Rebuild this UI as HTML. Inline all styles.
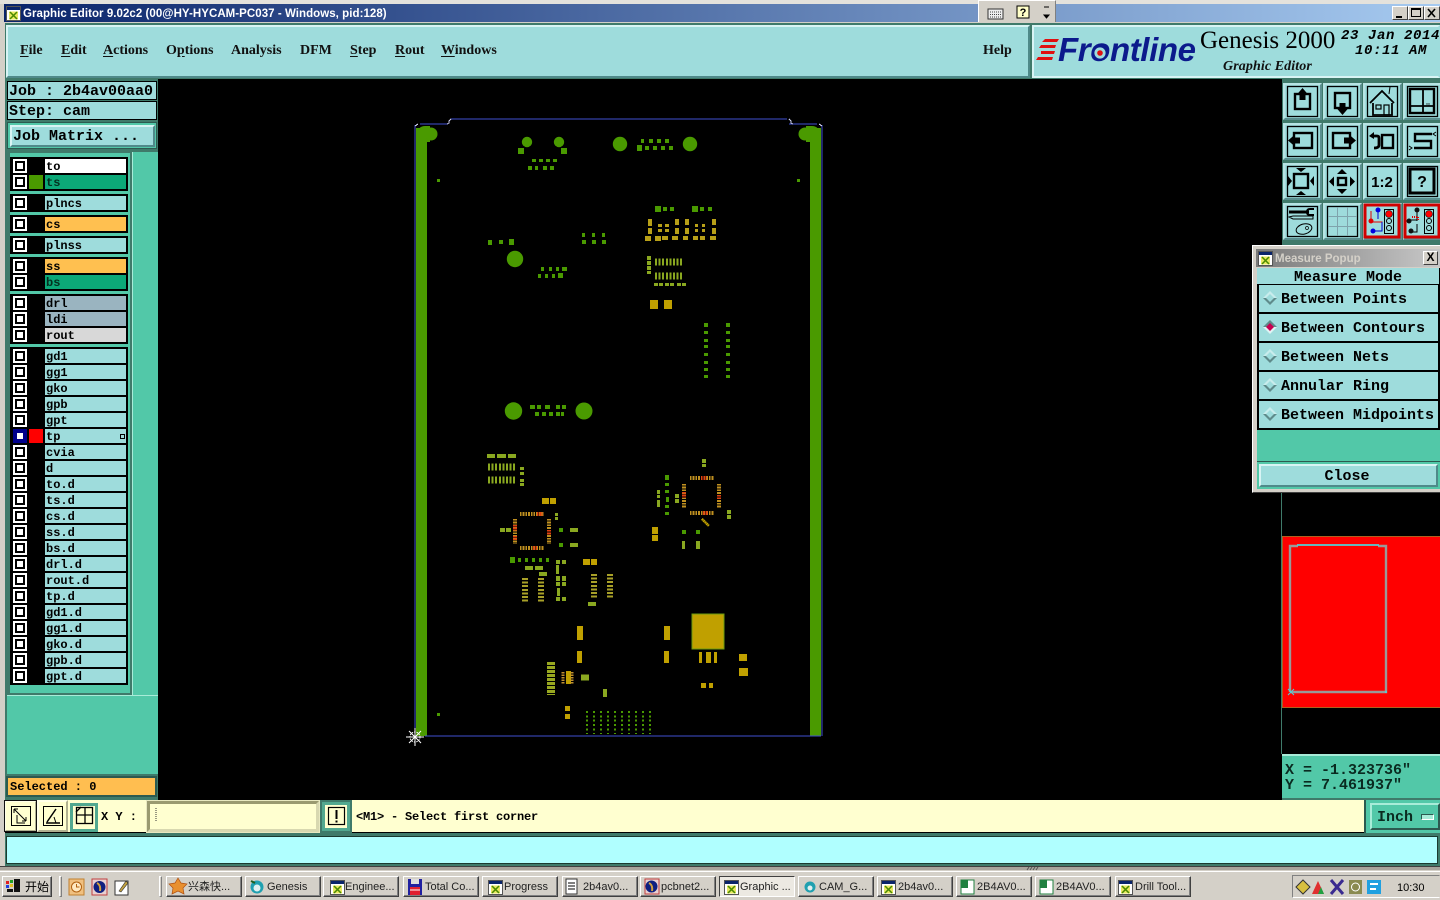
<!DOCTYPE html>
<html><head><meta charset="utf-8"><title>Graphic Editor</title>
<style>
html,body{margin:0;padding:0;width:1440px;height:900px;overflow:hidden;background:#d4d0c8}
div{position:absolute;box-sizing:border-box;white-space:pre}
.m{font-family:"Liberation Mono",monospace;font-weight:bold;color:#000}
.g{left:10px;width:118px;background:#000}
.r{left:45px;width:81px;height:14px;background:#9edcdc;font:bold 12px/16px "Liberation Mono",monospace;color:#000;padding-left:1px;letter-spacing:0}
.c{left:13px;width:14px;height:14px;border:2px solid #fff;background:#fff;box-shadow:inset 0 0 0 2px #000}
.t{font:bold 14px/20px "Liberation Serif",serif;top:41px;color:#111}
.t u{text-underline-offset:2px}
.p{left:1259px;width:179px;height:27px;background:#9edcdc;font:bold 15px/29px "Liberation Mono",monospace;padding-left:22px}
.b{top:876px;height:21px;width:76px;background:#d4d0c8;border:1px solid;border-color:#fff #404040 #404040 #fff;box-shadow:inset -1px -1px 0 #808080;font:11px/21px "Liberation Sans","Noto Sans CJK SC",sans-serif;color:#222;padding-left:20px;overflow:hidden}
svg{position:absolute;left:0;top:0}
svg text{font-family:"Liberation Sans",sans-serif}
</style></head><body>

<!-- title -->
<div style="left:0;top:0;width:1440px;height:4px;background:#e4e2dc"></div>
<div style="left:4px;top:4px;width:1436px;height:18px;background:linear-gradient(90deg,#0a246a,#a6caf0)"></div>
<div style="left:23px;top:5px;height:18px;font:bold 11.5px/18px 'Liberation Sans',sans-serif;color:#fff;letter-spacing:.05px">Graphic Editor 9.02c2 (00@HY-HYCAM-PC037 - Windows, pid:128)</div>
<div style="left:978px;top:0;width:78px;height:23px;background:#d4d0c8;border:1px solid;border-color:#fff #808080 #808080 #fff"></div>
<div style="left:1392px;top:6px;width:16px;height:14px;background:#d4d0c8;border:1px solid;border-color:#fff #404040 #404040 #fff"></div>
<div style="left:1408px;top:6px;width:16px;height:14px;background:#d4d0c8;border:1px solid;border-color:#fff #404040 #404040 #fff"></div>
<div style="left:1424px;top:6px;width:16px;height:14px;background:#d4d0c8;border:1px solid;border-color:#fff #404040 #404040 #fff"></div>

<!-- main -->
<div style="left:0;top:22px;width:1440px;height:850px;background:#d4d0c8"></div>
<div style="left:5px;top:23px;width:1435px;height:844px;background:#3f7a6a"></div>
<div style="left:6px;top:25px;width:1024px;height:53px;background:#9edcdc;border:2px solid;border-color:#d8f4f4 #4f8a8a #4f8a8a #d8f4f4"></div>
<div style="left:1032px;top:25px;width:408px;height:53px;background:#9edcdc;border:2px solid;border-color:#d8f4f4 #9edcdc #d8f4f4 #d8f4f4"></div>
<div class="t" style="left:20px"><u>F</u>ile</div>
<div class="t" style="left:61px"><u>E</u>dit</div>
<div class="t" style="left:103px"><u>A</u>ctions</div>
<div class="t" style="left:166px">O<u>p</u>tions</div>
<div class="t" style="left:231px">Analysis</div>
<div class="t" style="left:300px">DFM</div>
<div class="t" style="left:350px"><u>S</u>tep</div>
<div class="t" style="left:395px"><u>R</u>out</div>
<div class="t" style="left:441px"><u>W</u>indows</div>
<div class="t" style="left:983px">Help</div>

<div style="left:1058px;top:31px;font:italic bold 33px/38px 'Liberation Sans',sans-serif;color:#0c1a8c;letter-spacing:-.4px">Frontline</div>
<div style="left:1200px;top:26px;font:25px/30px 'Liberation Serif',serif;color:#000">Genesis 2000</div>
<div style="left:1223px;top:58px;font:italic bold 14px/17px 'Liberation Serif',serif;color:#111;letter-spacing:.1px">Graphic Editor</div>
<div class="m" style="left:1341px;top:28px;font-style:italic;font-size:14px;line-height:16px;letter-spacing:.6px">23 Jan 2014</div>
<div class="m" style="left:1355px;top:43px;font-style:italic;font-size:14px;line-height:16px;letter-spacing:.6px">10:11 AM</div>

<!-- canvas -->
<div style="left:158px;top:79px;width:1124px;height:721px;background:#000"></div>

<!-- left panel -->
<div style="left:5px;top:79px;width:153px;height:721px;background:#3f7a6a"></div>
<div class="m" style="left:7px;top:81px;width:150px;height:19px;background:#9edcdc;border:1px solid #000;font-size:15px;line-height:19px;padding-left:1px">Job : 2b4av00aa0</div>
<div class="m" style="left:7px;top:101px;width:150px;height:19px;background:#9edcdc;border:1px solid #000;font-size:15px;line-height:19px;padding-left:1px">Step: cam</div>
<div style="left:7px;top:122px;width:150px;height:27px;background:#52c8a8;border:1px solid #2c5a50"></div>
<div class="m" style="left:10px;top:125px;width:145px;height:22px;background:#9edcdc;border:2px solid;border-color:#d8f4f4 #4f8a8a #4f8a8a #d8f4f4;font-size:15px;line-height:20px;padding-left:1px">Job Matrix ...</div>
<div style="left:132px;top:152px;width:26px;height:622px;background:#52c8a8;border-left:1px solid #a8ecd8"></div>
<div style="left:7px;top:695px;width:151px;height:79px;background:#52c8a8;border-top:1px solid #a8ecd8"></div>
<div style="left:10px;top:153px;width:121px;height:541px;background:#52c8a8;border-right:1px solid #3f7a6a;border-bottom:1px solid #3f7a6a"></div>

<div class="g" style="top:157px;height:34px"></div>
<div class="g" style="top:194px;height:18px"></div>
<div class="g" style="top:215px;height:18px"></div>
<div class="g" style="top:236px;height:18px"></div>
<div class="g" style="top:257px;height:34px"></div>
<div class="g" style="top:294px;height:50px"></div>
<div class="g" style="top:347px;height:338px"></div>

<div class="c" style="top:159px"></div><div class="r" style="top:159px;background:#fff">to</div>
<div class="c" style="top:175px"></div><div class="r" style="top:175px;background:#0ca878;color:#043020">ts</div>
<div style="left:29px;top:175px;width:14px;height:14px;background:#4a9a00"></div>
<div class="c" style="top:196px"></div><div class="r" style="top:196px">plncs</div>
<div class="c" style="top:217px"></div><div class="r" style="top:217px;background:#ffc050">cs</div>
<div class="c" style="top:238px"></div><div class="r" style="top:238px">plnss</div>
<div class="c" style="top:259px"></div><div class="r" style="top:259px;background:#ffc050">ss</div>
<div class="c" style="top:275px"></div><div class="r" style="top:275px;background:#0ca878;color:#043020">bs</div>
<div class="c" style="top:296px"></div><div class="r" style="top:296px;background:#9ab4c0">drl</div>
<div class="c" style="top:312px"></div><div class="r" style="top:312px;background:#9ab4c0">ldi</div>
<div class="c" style="top:328px"></div><div class="r" style="top:328px;background:#d8d8d8">rout</div>
<div class="c" style="top:349px"></div><div class="r" style="top:349px">gd1</div>
<div class="c" style="top:365px"></div><div class="r" style="top:365px">gg1</div>
<div class="c" style="top:381px"></div><div class="r" style="top:381px">gko</div>
<div class="c" style="top:397px"></div><div class="r" style="top:397px">gpb</div>
<div class="c" style="top:413px"></div><div class="r" style="top:413px">gpt</div>
<div class="c" style="top:429px;border-color:#00008c;box-shadow:inset 0 0 0 2px #00008c"></div><div class="r" style="top:429px">tp</div>
<div style="left:29px;top:429px;width:14px;height:14px;background:#f00"></div>
<div style="left:120px;top:434px;width:5px;height:5px;border:1px solid #000"></div>
<div class="c" style="top:445px"></div><div class="r" style="top:445px">cvia</div>
<div class="c" style="top:461px"></div><div class="r" style="top:461px">d</div>
<div class="c" style="top:477px"></div><div class="r" style="top:477px">to.d</div>
<div class="c" style="top:493px"></div><div class="r" style="top:493px">ts.d</div>
<div class="c" style="top:509px"></div><div class="r" style="top:509px">cs.d</div>
<div class="c" style="top:525px"></div><div class="r" style="top:525px">ss.d</div>
<div class="c" style="top:541px"></div><div class="r" style="top:541px">bs.d</div>
<div class="c" style="top:557px"></div><div class="r" style="top:557px">drl.d</div>
<div class="c" style="top:573px"></div><div class="r" style="top:573px">rout.d</div>
<div class="c" style="top:589px"></div><div class="r" style="top:589px">tp.d</div>
<div class="c" style="top:605px"></div><div class="r" style="top:605px">gd1.d</div>
<div class="c" style="top:621px"></div><div class="r" style="top:621px">gg1.d</div>
<div class="c" style="top:637px"></div><div class="r" style="top:637px">gko.d</div>
<div class="c" style="top:653px"></div><div class="r" style="top:653px">gpb.d</div>
<div class="c" style="top:669px"></div><div class="r" style="top:669px">gpt.d</div>

<div style="left:5px;top:774px;width:153px;height:26px;background:#3f7a6a"></div>
<div class="m" style="left:6px;top:776px;width:151px;height:21px;background:#ffbe50;border:2px solid #2c5a50;font-size:12px;line-height:19px;padding-left:2px">Selected : 0</div>

<!-- right -->
<div style="left:1282px;top:80px;width:158px;height:165px;background:#3f7a6a"></div>
<div style="left:1281px;top:492px;width:1px;height:262px;background:#3f7a6a"></div>
<div style="left:1282px;top:492px;width:158px;height:262px;background:#000"></div>
<div style="left:1282px;top:536px;width:158px;height:172px;background:#f00;border:1px solid #b06020;border-right:0"></div>
<div style="left:1282px;top:754px;width:158px;height:44px;background:#52c8a8;border-top:2px solid #a8ecd8"></div>
<div class="m" style="left:1285px;top:763px;font-size:15px;line-height:16px;color:#0a2a20">X = -1.323736"</div>
<div class="m" style="left:1285px;top:778px;font-size:15px;line-height:16px;color:#0a2a20">Y = 7.461937"</div>

<!-- popup -->
<div style="left:1252px;top:245px;width:188px;height:248px;background:#d4d0c8;border:1px solid;border-color:#fff #404040 #404040 #fff;border-right:0"></div>
<div style="left:1256px;top:249px;width:184px;height:18px;background:linear-gradient(90deg,#7a7a7a,#c8c8c8)"></div>
<div style="left:1275px;top:251px;font:bold 11.5px/16px 'Liberation Sans',sans-serif;color:#d4d0c8">Measure Popup</div>
<div style="left:1423px;top:251px;width:15px;height:14px;background:#d4d0c8;border:1px solid;border-color:#fff #404040 #404040 #fff;font:bold 12px/11px 'Liberation Sans',sans-serif;text-align:center;color:#000">X</div>
<div style="left:1257px;top:268px;width:183px;height:162px;background:#000"></div>
<div class="m" style="left:1257px;top:268px;width:182px;height:16px;background:#9edcdc;font-size:15px;line-height:19px;text-align:center">Measure Mode</div>
<div class="p m" style="top:285px">Between Points</div>
<div class="p m" style="top:314px">Between Contours</div>
<div class="p m" style="top:343px">Between Nets</div>
<div class="p m" style="top:372px">Annular Ring</div>
<div class="p m" style="top:401px">Between Midpoints</div>
<div style="left:1257px;top:430px;width:183px;height:31px;background:#52c8a8"></div>
<div style="left:1257px;top:461px;width:183px;height:28px;background:#52c8a8;border-top:1px solid #2c5a50"></div>
<div class="m" style="left:1259px;top:464px;width:179px;height:23px;background:#9edcdc;border:2px solid;border-color:#d8f4f4 #4f8a8a #4f8a8a #d8f4f4;font-size:15px;line-height:21px;text-align:center;padding-right:3px">Close</div>

<!-- bottom bar -->
<div style="left:5px;top:800px;width:1435px;height:33px;background:#ffffd0;border-bottom:1px solid #000"></div>
<div style="left:4px;top:800px;width:33px;height:32px;background:#ffffd0;border:2px solid;border-color:#ffffe8 #b0b090 #b0b090 #ffffe8;outline:1px solid #111;outline-offset:-1px"></div>
<div style="left:37px;top:800px;width:31px;height:32px;background:#ffffd0;border:2px solid;border-color:#ffffe8 #b0b090 #b0b090 #ffffe8"></div>
<div style="left:70px;top:803px;width:28px;height:29px;background:#ffffd0;border:3px solid #52a890"></div>
<div class="m" style="left:101px;top:809px;font-size:12px;line-height:16px">X Y :</div>
<div style="left:147px;top:801px;width:172px;height:31px;background:#ffffd0;border:3px solid;border-color:#9a9a70 #d8d8b0 #d8d8b0 #9a9a70;outline:1px solid #e8e8c0"></div>
<div style="left:320px;top:800px;width:32px;height:33px;background:#3f7a6a"></div>
<div style="left:322px;top:802px;width:28px;height:29px;background:#ffffd0;border:3px solid #52a890"></div>
<div class="m" style="left:356px;top:809px;font-size:12px;line-height:16px;letter-spacing:-.2px">&lt;M1&gt; - Select first corner</div>
<div style="left:1364px;top:800px;width:76px;height:33px;background:#52c8a8;border-left:2px solid #2c5a50"></div>
<div class="m" style="left:1370px;top:803px;width:70px;height:27px;background:#52c8a8;border:2px solid;border-color:#a8ecd8 #2c5a50 #2c5a50 #a8ecd8;font-size:15px;line-height:25px;padding-left:5px;color:#0a2a20">Inch</div>
<div style="left:1421px;top:814px;width:13px;height:6px;background:#a8ecd8;border:1px solid;border-color:#2c5a50 #fff #fff #2c5a50"></div>

<div style="left:5px;top:833px;width:1435px;height:33px;background:#3f7a6a"></div>
<div style="left:6px;top:836px;width:1432px;height:28px;background:#b0ffff;border:1px solid #1a3a30"></div>
<div style="left:0;top:866px;width:1440px;height:1px;background:#404040"></div>

<!-- taskbar -->
<div style="left:0;top:867px;width:1440px;height:33px;background:#d4d0c8;border-top:3px solid #a8a49c"></div>
<div style="left:0;top:871px;width:1440px;height:1px;background:#fff"></div>
<div style="left:2px;top:876px;width:50px;height:21px;background:#d4d0c8;border:1px solid;border-color:#fff #404040 #404040 #fff;box-shadow:inset -1px -1px 0 #808080;font:12px/20px 'Liberation Sans','Noto Sans CJK SC',sans-serif;padding-left:22px;color:#000">开始</div>
<div style="left:59px;top:876px;width:3px;height:21px;border:1px solid;border-color:#fff #808080 #808080 #fff"></div>
<div style="left:159px;top:876px;width:3px;height:21px;border:1px solid;border-color:#fff #808080 #808080 #fff"></div>
<div class="b" style="left:166px;padding-left:21px">兴森快...</div>
<div class="b" style="left:245px;padding-left:21px">Genesis</div>
<div class="b" style="left:323px;padding-left:21px">Enginee...</div>
<div class="b" style="left:403px;padding-left:21px">Total Co...</div>
<div class="b" style="left:482px;padding-left:21px">Progress</div>
<div class="b" style="left:562px;padding-left:20px">2b4av0...</div>
<div class="b" style="left:640px;padding-left:20px">pcbnet2...</div>
<div class="b" style="left:719px;padding-left:20px;border-color:#404040 #fff #fff #404040;box-shadow:none;background:#ece9e2">Graphic ...</div>
<div class="b" style="left:798px;padding-left:20px">CAM_G...</div>
<div class="b" style="left:877px;padding-left:20px">2b4av0...</div>
<div class="b" style="left:956px;padding-left:20px">2B4AV0...</div>
<div class="b" style="left:1035px;padding-left:20px">2B4AV0...</div>
<div class="b" style="left:1115px;padding-left:19px">Drill Tool...</div>
<div style="left:1292px;top:875px;width:148px;height:23px;border:1px solid;border-color:#808080 #d4d0c8 #fff #808080"></div>
<div style="left:1397px;top:881px;font:11px/15px 'Liberation Sans',sans-serif;color:#000">10:30</div>

<svg width="1440" height="900" viewBox="0 0 1440 900">
<defs>
<symbol id="w" viewBox="0 0 15 15" overflow="visible"><rect x=".5" y=".5" width="14" height="14" fill="#fff" stroke="#555"/><rect x="1" y="1" width="13" height="3" fill="#0a246a"/><rect x="3" y="5.500" width="9" height="8" fill="#e8e860"/><path d="M4 6l7 7M11 6l-7 7" stroke="#4a8a00" stroke-width="1.500"/></symbol>
<symbol id="btn" viewBox="0 0 39 37" overflow="visible"><rect width="39" height="37" fill="#5a8f8f"/><path d="M0 0h39l-2 2H2v33l-2 2z" fill="#b8e4e4"/><rect x="2" y="2" width="35" height="33" fill="#9edcdc"/><rect x="4.500" y="3.500" width="30" height="30" fill="none" stroke="#000" stroke-width="1.300"/></symbol>
<symbol id="tl" viewBox="0 0 39 37" overflow="visible"><rect x="2" y="2" width="34" height="32" fill="#9edcdc" stroke="#d00000" stroke-width="3"/><rect x="21.500" y="6.500" width="9" height="24" fill="#9edcdc" stroke="#000"/><circle cx="26" cy="11" r="3.500" fill="#f00" stroke="#000" stroke-width=".6"/><circle cx="26" cy="18" r="2.500" fill="none" stroke="#000"/><circle cx="26" cy="25" r="2.500" fill="none" stroke="#000"/></symbol>
</defs>

<!-- title icons -->
<use href="#w" x="6" y="6" width="15" height="15"/>
<rect x="988" y="9" width="15" height="10" fill="#eee" stroke="#333"/><path d="M990 12h11M990 14.500h11M990 17h11" stroke="#444" stroke-dasharray="1 1"/>
<rect x="1017" y="6" width="12" height="12" fill="#ffffc8" stroke="#000"/><text x="1023" y="16" text-anchor="middle" font-size="11" font-weight="bold" fill="#000">?</text>
<path d="M1044 7h5M1044 15h5l-2.500 3z" stroke="#000" fill="#000"/>
<path d="M1396 17h6" stroke="#000" stroke-width="2"/>
<rect x="1411.500" y="8.500" width="9" height="8" fill="none" stroke="#000"/><path d="M1411 9h10" stroke="#000" stroke-width="2"/>
<path d="M1428 9l7 8M1435 9l-7 8" stroke="#000" stroke-width="1.600"/>

<!-- logo -->
<path d="M1045 39h14l-2 3h-15zM1041 45h15l-1 3h-16zM1041 51h14l-1 3h-13zM1038 57h15l-1 3h-16z" fill="#e01010"/>
<circle cx="1100" cy="53" r="6.500" fill="#9edcdc" stroke="#0c1a8c" stroke-width="1.800"/>
<circle cx="1100" cy="53" r="2.800" fill="#e01010"/>

<!-- PCB -->
<g shape-rendering="crispEdges">
<path d="M416 128h11v608h-11zM810 128h11v608h-11z" fill="#4a9a00"/>
<path d="M415 125v611M822 125v611M425 736h396M420 124h28M789 124h28M451 119h336" stroke="#4050d0" fill="none"/>
<path d="M447 124l2-1v-2l2-2M789 119l2 2v2l2 1M415 126l3-2M822 126l-3-2" stroke="#d0d0f0" fill="none"/>
</g>
<path d="M417 131q3-5 8-5h5v16h-3v-3h-10zM820 131q-3-5-8-5h-6v16h4v-3h10z" fill="#4a9a00"/>
<g fill="#4a9a00">
<circle cx="431" cy="134" r="6.500"/><circle cx="805" cy="134" r="6.500"/>
<circle cx="527" cy="142" r="5.200"/><circle cx="559" cy="142" r="5.200"/>
<circle cx="620" cy="144" r="7.200"/><circle cx="690" cy="144" r="7.200"/>
<circle cx="515" cy="259" r="8.200"/>
<circle cx="513.500" cy="411" r="8.700"/><circle cx="584" cy="411" r="8.500"/>
</g>
<g shape-rendering="crispEdges">
<path fill="#4a9a00" d="M518 148h6v6h-6zM561 148h6v6h-6zM532 159h4v3h-4zM539 159h4v3h-4zM546 159h4v3h-4zM553 159h4v3h-4zM528 166h4v4h-4zM535 166h3v4h-3zM543 166h4v4h-4zM550 166h4v4h-4zM641 139h3v4h-3zM649 139h4v4h-4zM657 139h4v4h-4zM665 139h4v4h-4zM637 145h5v6h-5zM645 146h4v4h-4zM653 146h4v4h-4zM661 146h4v4h-4zM669 146h4v4h-4zM437 179h3v3h-3zM797 179h3v3h-3zM655 206h6v6h-6zM663 207h4v4h-4zM670 207h4v4h-4zM692 206h6v6h-6zM700 207h4v4h-4zM708 207h4v4h-4zM488 240h4v5h-4zM499 240h4v4h-4zM509 239h5v6h-5zM582 233h3v4h-3zM592 233h3v4h-3zM602 233h3v4h-3zM582 240h4v4h-4zM592 240h4v4h-4zM602 240h4v4h-4zM541 267h3v4h-3zM549 267h3v4h-3zM556 267h3v4h-3zM562 267h5v4h-5zM538 274h3v4h-3zM545 274h3v4h-3zM552 274h3v4h-3zM558 273h5v5h-5zM704 323h4v4h-4zM726 323h4v4h-4zM704 331h4v3h-4zM726 331h4v3h-4zM704 339h4v3h-4zM726 339h4v3h-4zM704 345h4v3h-4zM726 345h4v3h-4zM704 353h4v3h-4zM726 353h4v3h-4zM704 361h4v3h-4zM726 361h4v3h-4zM704 368h4v3h-4zM726 368h4v3h-4zM704 375h4v3h-4zM726 375h4v3h-4zM530 405h5v4h-5zM537 405h4v4h-4zM545 405h5v4h-5zM556 405h4v4h-4zM562 405h4v4h-4zM535 412h4v4h-4zM542 412h4v4h-4zM549 412h4v4h-4zM556 412h4v4h-4zM561 412h3v4h-3zM437 713h3v3h-3zM510 557h5v6h-5zM518 558h3v4h-3zM525 558h3v4h-3zM532 558h3v4h-3zM539 558h3v4h-3zM546 558h3v4h-3zM559 528h4v4h-4zM559 543h4v4h-4zM665 475h4v5h-4zM665 483h4v3h-4zM665 490h4v3h-4zM666 497h3v5h-3zM665 505h4v3h-4zM665 512h4v3h-4zM682 530h4v4h-4zM696 530h4v4h-4z"/>
<path fill="#8aa820" d="M487 454h8v4h-8zM497 454h9v4h-9zM508 454h8v4h-8zM520 467h4v3h-4zM520 472h4v3h-4zM520 479h4v3h-4zM520 483h4v3h-4zM555 513h3v3h-3zM555 517h3v3h-3zM500 528h5v4h-5zM506 528h5v4h-5zM570 528h8v4h-8zM570 543h8v4h-8zM525 566h8v4h-8zM535 566h4v4h-4zM539 566h4v4h-4zM539 572h8v4h-8zM556 560h4v4h-4zM562 560h4v4h-4zM556 565h3v5h-3zM556 570h3v4h-3zM556 576h4v5h-4zM562 576h4v5h-4zM556 582h4v4h-4zM562 582h4v4h-4zM557 588h3v4h-3zM557 592h3v4h-3zM556 597h4v4h-4zM562 597h4v4h-4zM588 602h8v4h-8zM702 459h4v4h-4zM702 464h4v3h-4zM657 490h3v4h-3zM657 495h3v3h-3zM657 500h3v7h-3zM675 494h4v4h-4zM675 499h4v4h-4zM727 510h4v4h-4zM727 515h4v4h-4zM682 541h3v8h-3zM696 541h4v8h-4zM603 689h4v8h-4zM647 256h4v4h-4zM647 261h4v4h-4zM647 266h4v4h-4zM647 271h4v3h-4zM654 283h4v3h-4zM659 283h4v3h-4zM665 283h4v3h-4zM670 283h4v3h-4zM677 283h4v3h-4zM682 283h4v3h-4z"/>
<path fill="#b8a018" d="M648 219h4v7h-4zM648 228h4v6h-4zM675 219h4v6h-4zM675 228h4v6h-4zM685 219h4v6h-4zM685 228h4v6h-4zM712 219h4v6h-4zM712 228h4v6h-4zM658 224h4v3h-4zM665 224h4v3h-4zM658 229h4v3h-4zM665 229h4v3h-4zM695 224h3v3h-3zM702 224h3v3h-3zM695 229h3v3h-3zM702 229h3v3h-3zM645 236h6v5h-6zM655 236h6v5h-6zM662 236h6v4h-6zM672 236h6v4h-6zM683 236h5v4h-5zM693 236h5v4h-5zM700 236h5v4h-5zM710 236h6v4h-6z"/>
<path fill="#c0a000" d="M650 300h8v9h-8zM664 300h8v9h-8zM542 498h7v6h-7zM550 498h6v6h-6zM583 559h7v6h-7zM591 559h6v6h-6zM652 527h6v7h-6zM652 535h6v6h-6zM577 626h6v14h-6zM577 651h5v12h-5zM664 626h6v14h-6zM664 651h5v12h-5zM699 652h3v11h-3zM706 652h5v11h-5zM714 652h3v11h-3zM739 654h8v7h-8zM739 668h9v8h-9zM565 706h5v5h-5zM565 714h5v5h-5zM701 683h5v5h-5zM709 683h4v5h-4zM566 671h5v13h-5z"/>
<rect x="692" y="614" width="32" height="35" fill="#c0a000" stroke="#6a9a10" stroke-width="1"/>
<g fill="none" stroke="#8aa820">
<path stroke-width="7" stroke-dasharray="2 1.600" d="M655 262h28M655 276h28M488 467h28M488 480h28"/>
<path stroke-width="6" stroke="#a8a028" stroke-dasharray="2 1.600" d="M525 578v24M541 578v24M594 574v24M610 574v24"/>
<path stroke-width="8" stroke="#98a820" stroke-dasharray="3 1" d="M551 662v33"/>
<path stroke-width="3" stroke="#c09030" stroke-dasharray="1.500 1" d="M563 672v12M572 672v12"/>
<path stroke-width="3" d="M581 676h8M581 679h8"/>
</g>
<g fill="none" stroke="#c09020" stroke-dasharray="1.700 1">
<path stroke-width="4" d="M520 514h24M520 548h24M690 478h24M690 513h24"/>
<path stroke-width="4" d="M515 519v25M549 519v25M684 484v24M719 484v24"/>
</g>
<g fill="none" stroke="#e04010" stroke-dasharray="1.700 1">
<path stroke-width="4" d="M537 514h6M533 548h4M701 478h6M703 513h5"/>
<path stroke-width="4" d="M515 525v6M515 536v4M549 530v5M684 492v6M719 495v4"/>
</g>
<path d="M702 519l7 7" stroke="#c0a000" stroke-width="2.500" stroke-dasharray="1.500 .6"/>
<path fill="none" stroke="#4a9a00" stroke-width="2" stroke-dasharray="2 2.350" d="M587 711v23M594 711v23M601 711v23M608 711v23M615 711v23M622 711v23M629 711v23M636 711v23M643 711v23M650 711v23"/>
</g>
<!-- cursor -->
<g stroke="#fff" stroke-width="1" fill="none"><path d="M406 737h18M415 728v18M409 731l12 12M421 731l-12 12"/><circle cx="415" cy="737" r="5" stroke-dasharray="1.500 1"/></g>

<!-- toolbar buttons -->
<use href="#btn" x="1283" y="83" width="39" height="37"/><use href="#btn" x="1323" y="83" width="39" height="37"/><use href="#btn" x="1363" y="83" width="39" height="37"/><use href="#btn" x="1403" y="83" width="39" height="37"/>
<use href="#btn" x="1283" y="123" width="39" height="37"/><use href="#btn" x="1323" y="123" width="39" height="37"/><use href="#btn" x="1363" y="123" width="39" height="37"/><use href="#btn" x="1403" y="123" width="39" height="37"/>
<use href="#btn" x="1283" y="163" width="39" height="37"/><use href="#btn" x="1323" y="163" width="39" height="37"/><use href="#btn" x="1363" y="163" width="39" height="37"/><use href="#btn" x="1403" y="163" width="39" height="37"/>
<use href="#btn" x="1283" y="203" width="39" height="37"/><use href="#btn" x="1323" y="203" width="39" height="37"/><use href="#btn" x="1363" y="203" width="39" height="37"/><use href="#btn" x="1403" y="203" width="39" height="37"/>

<g fill="none" stroke="#000" stroke-width="2.400">
<g transform="translate(1283 83)"><rect x="12" y="11" width="15" height="15"/><path d="M19.500 5l-6 7h3v5h6v-5h3z" fill="#000" stroke="none"/></g>
<g transform="translate(1323 83)"><rect x="12" y="10" width="15" height="15"/><path d="M19.500 32l-6-7h3v-5h6v5h3z" fill="#000" stroke="none"/></g>
<g transform="translate(1363 83)" stroke-width="1.800"><path d="M7 20L19 8l12 12M10 20v12h19V20"/><rect x="13" y="22" width="5" height="4" stroke-width="1.200"/><rect x="21" y="22" width="5" height="10" stroke-width="1.200"/><path d="M26 11l1-7" stroke-width="1"/></g>
<g transform="translate(1403 83)"><rect x="7" y="6" width="24" height="24"/><path d="M7 23h24M20 6v24" stroke-width="1.800"/></g>
<g transform="translate(1283 123)"><rect x="11" y="10" width="18" height="15"/><path d="M5 17.500l7-6v3h5v6h-5v3z" fill="#000" stroke="none"/></g>
<g transform="translate(1323 123)"><rect x="10" y="10" width="17" height="15"/><path d="M33 17.500l-7-6v3h-5v6h5v3z" fill="#000" stroke="none"/></g>
<g transform="translate(1363 123)"><rect x="19" y="12" width="11" height="13"/><path d="M9 13h5q2 0 2 2v7q0 3-5 3" stroke-width="2.800"/><path d="M6 13l5-4v7z" fill="#000" stroke="none"/></g>
<g transform="translate(1403 123)"><path d="M29 11H12v7h16v7H11"/><path d="M33 9l-3 2 3 2M6 23l3 2-3 2" stroke-width="1"/></g>
<g transform="translate(1283 163)"><rect x="11" y="11" width="14" height="14"/><path d="M18 9l-5-4h10zM18 28l-5 4h10zM9 18l-4-5v10zM27 18l4-5v10z" fill="#000" stroke="none"/></g>
<g transform="translate(1323 163)"><rect x="15" y="15" width="8" height="7" stroke-width="2.400"/><path d="M19 6l-5 5h10zM19 31l-5-5h10zM6 18.500l5-5v10zM32 18.500l-5-5v10z" fill="#000" stroke="none"/></g>
<g transform="translate(1403 163)" stroke-width="3"><rect x="7" y="6" width="24" height="24"/></g>
<g transform="translate(1283 203)" stroke-width="1.500"><path d="M6 9h20" stroke-width="3"/><path d="M31 6h-4q-3 0-3 3t3 3h4" stroke-width="2"/><path d="M6 14l4-1h20v3H10z" stroke-width="1"/><ellipse cx="21" cy="26" rx="8" ry="5" stroke-width="1" transform="rotate(-15 21 26)"/><circle cx="24" cy="25" r="1.500" stroke-width=".7"/></g>
<g transform="translate(1323 203)" stroke="#7fa4ac" stroke-width="1"><path d="M14.500 4v29M24.500 4v29M5 13.500h29M5 23.500h29"/></g>
</g>
<text x="1382" y="187" text-anchor="middle" font-size="15" font-weight="bold" fill="#000">1:2</text>
<text x="1422" y="187" text-anchor="middle" font-size="16" font-weight="bold" fill="#000">?</text>
<text x="1426" y="105" font-size="4" fill="#000">xy</text>

<use href="#tl" x="1363" y="203" width="39" height="37"/><use href="#tl" x="1403" y="203" width="39" height="37"/>
<g transform="translate(1363 203)"><path d="M8 8v11h11v9H11" fill="none" stroke="#e00000" stroke-width="1"/><path d="M15 8v8" stroke="#0000d0" fill="none"/><path d="M11 28h8v-9" stroke="#0000d0" fill="none"/><circle cx="15" cy="7" r="2.500" fill="#0000e0"/><circle cx="8" cy="18" r="2.500" fill="#e00000"/><circle cx="10" cy="28" r="2.500" fill="#0000e0"/></g>
<g transform="translate(1403 203)"><path d="M14 8v10M14 21v8H8M6 17h8" fill="none" stroke="#000"/><path d="M9 14h6v3" fill="none" stroke="#e00000" stroke-width="2" stroke-dasharray="1 1"/><circle cx="14" cy="7" r="2.500" fill="#111"/><circle cx="6" cy="18" r="2.500" fill="#111"/><circle cx="8" cy="28" r="2.500" fill="#111"/></g>

<!-- overview -->
<path d="M1290 692V546h8M1378 546h8v146h-96" fill="none" stroke="#9a9a9a" stroke-width="2.400"/>
<path d="M1297 545h82M1385 692h2" stroke="#50d0d8" stroke-width="1.800" fill="none"/>
<path d="M1288 689l6 6M1294 689l-6 6" stroke="#50d0d8" stroke-width="1"/>

<!-- popup -->
<use href="#w" x="1258" y="251" width="15" height="15"/>
<g>
<path d="M1263 298l7-7 7 7z" fill="#c8ecec"/><path d="M1263 298l7 7 7-7z" fill="#5f8a8a"/><path d="M1266 298l4-4 4 4-4 4z" fill="#9edcdc"/>
<path d="M1263 327l7-7 7 7z" fill="#5f8a8a"/><path d="M1263 327l7 7 7-7z" fill="#e0f4f4"/><path d="M1266 327l4-4 4 4-4 4z" fill="#c80050"/>
<path d="M1263 356l7-7 7 7z" fill="#c8ecec"/><path d="M1263 356l7 7 7-7z" fill="#5f8a8a"/><path d="M1266 356l4-4 4 4-4 4z" fill="#9edcdc"/>
<path d="M1263 385l7-7 7 7z" fill="#c8ecec"/><path d="M1263 385l7 7 7-7z" fill="#5f8a8a"/><path d="M1266 385l4-4 4 4-4 4z" fill="#9edcdc"/>
<path d="M1263 414l7-7 7 7z" fill="#c8ecec"/><path d="M1263 414l7 7 7-7z" fill="#5f8a8a"/><path d="M1266 414l4-4 4 4-4 4z" fill="#9edcdc"/>
</g>

<!-- bottom icons -->
<g fill="none" stroke="#000">
<rect x="11.500" y="806.500" width="19" height="19"/><path d="M14 809l12 12M14 809h4M14 809v4M26 821h-4M26 821v-4M17 815v8h8" stroke-width="1"/>
<rect x="43.500" y="806.500" width="19" height="19"/><path d="M46 823h14M47 822l9-13" stroke-width="1.500"/><path d="M54 817l2 6" stroke-width="1"/>
<rect x="76.500" y="807.500" width="16" height="16" stroke-width="1.300"/><path d="M76 815h17M85 808v16M76 812l5-5" stroke-width="1.300"/>
<rect x="328.500" y="807.500" width="16" height="17" stroke-width="1.200"/><path d="M336.500 810v9" stroke-width="2"/><path d="M336.500 820.500v2" stroke-width="2"/>
<path d="M156 808v14" stroke="#333" stroke-dasharray="1 1"/>
</g>

<!-- taskbar icons -->
<g shape-rendering="crispEdges"><rect x="6" y="881" width="3" height="3" fill="#e02020"/><rect x="10" y="880" width="3" height="3" fill="#20a020"/><rect x="6" y="885" width="3" height="3" fill="#2040e0"/><rect x="10" y="884" width="3" height="3" fill="#e0c020"/><rect x="14" y="879" width="6" height="13" fill="#111"/><rect x="7" y="889" width="6" height="3" fill="#111"/></g>
<rect x="69" y="879" width="15" height="16" fill="#f0c080" stroke="#c08030"/><circle cx="76.500" cy="887" r="5" fill="#ffe8c0" stroke="#b06010"/><path d="M76.500 884v3h3" stroke="#b06010" fill="none"/>
<rect x="92" y="879" width="15" height="16" fill="#e8d0d0" stroke="#c04040"/><circle cx="99.500" cy="887" r="6" fill="#102080"/><path d="M97 883q4 2 3 8" stroke="#d0a040" stroke-width="2" fill="none"/>
<rect x="115" y="881" width="13" height="14" fill="#fff" stroke="#333"/><path d="M119 891l7-10 2 2-7 9z" fill="#c0a040" stroke="#333" stroke-width=".6"/>
<path d="M178 878l3 5 6 1-4 4 1 6-6-3-6 3 1-6-4-4 6-1z" fill="#e89030" stroke="#b05010" stroke-width=".7"/>
<circle cx="257" cy="887" r="6.500" fill="#20a0b0"/><circle cx="257" cy="888" r="3.500" fill="#e0f0f0"/><path d="M251 881l4 2" stroke="#206020" stroke-width="2"/>
<use href="#w" x="330" y="880" width="15" height="15"/>
<rect x="408" y="879" width="14" height="16" fill="#2020a0"/><rect x="411" y="879" width="8" height="5" fill="#ddd"/><rect x="410" y="887" width="10" height="8" fill="#e02030"/><path d="M410 890h10" stroke="#fff"/>
<use href="#w" x="488" y="880" width="15" height="15"/>
<rect x="566" y="879" width="11" height="15" fill="#fff" stroke="#333"/><path d="M568 883h7M568 886h7M568 889h7" stroke="#000"/>
<rect x="645" y="879" width="14" height="15" fill="#e8d0d0" stroke="#c04040"/><circle cx="651.500" cy="886.500" r="6" fill="#102080"/><path d="M649 883q4 2 3 8" stroke="#d0a040" stroke-width="2" fill="none"/>
<use href="#w" x="724" y="880" width="15" height="15"/>
<circle cx="810" cy="887" r="5.500" fill="#20a0b0"/><circle cx="810" cy="888" r="2.500" fill="#e0f0f0"/>
<use href="#w" x="881" y="880" width="15" height="15"/>
<rect x="961" y="880" width="13" height="14" fill="#fff" stroke="#208040"/><rect x="961" y="880" width="7" height="8" fill="#208040"/>
<rect x="1040" y="880" width="13" height="14" fill="#fff" stroke="#208040"/><rect x="1040" y="880" width="7" height="8" fill="#208040"/>
<use href="#w" x="1118" y="880" width="15" height="15"/>
<path d="M1296 887l7-7 7 7-7 7z" fill="#d8c040" stroke="#333"/>
<path d="M1312 894l6-13 6 13z" fill="#e03030"/><path d="M1318 894l3-7 3 7z" fill="#20a040"/>
<path d="M1331 880l12 14M1343 880l-12 14" stroke="#3a2a90" stroke-width="3"/>
<rect x="1349" y="880" width="13" height="14" fill="#8a8a50"/><circle cx="1355.500" cy="887" r="4" fill="none" stroke="#fff"/>
<rect x="1367" y="880" width="14" height="14" fill="#20a0e0"/><path d="M1370 884h8M1370 889h6" stroke="#fff" stroke-width="2"/>
<path d="M1027 870l2-3M1030 870l2-3M1033 870l2-3M1036 870l2-3" stroke="#555"/>
</svg>
</body></html>
